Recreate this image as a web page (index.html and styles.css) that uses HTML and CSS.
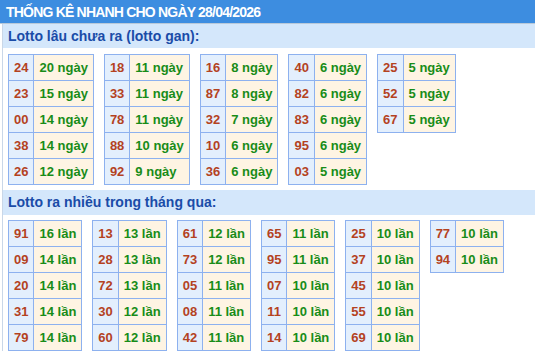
FILE: index.html
```html
<!DOCTYPE html>
<html lang="vi">
<head>
<meta charset="utf-8">
<link rel="stylesheet" href="styles.css">
</head>
<body>
<div class="header">THỐNG KÊ NHANH CHO NGÀY 28/04/2026</div>
<div class="content">
  <div class="band">Lotto lâu chưa ra (lotto gan):</div>
  <div class="tables first">
    <table><tr><td class="n">24</td><td class="v">20 ngày</td></tr><tr><td class="n">23</td><td class="v">15 ngày</td></tr><tr><td class="n">00</td><td class="v">14 ngày</td></tr><tr><td class="n">38</td><td class="v">14 ngày</td></tr><tr><td class="n">26</td><td class="v">12 ngày</td></tr></table>
    <table><tr><td class="n">18</td><td class="v">11 ngày</td></tr><tr><td class="n">33</td><td class="v">11 ngày</td></tr><tr><td class="n">78</td><td class="v">11 ngày</td></tr><tr><td class="n">88</td><td class="v">10 ngày</td></tr><tr><td class="n">92</td><td class="v">9 ngày</td></tr></table>
    <table><tr><td class="n">16</td><td class="v">8 ngày</td></tr><tr><td class="n">87</td><td class="v">8 ngày</td></tr><tr><td class="n">32</td><td class="v">7 ngày</td></tr><tr><td class="n">10</td><td class="v">6 ngày</td></tr><tr><td class="n">36</td><td class="v">6 ngày</td></tr></table>
    <table><tr><td class="n">40</td><td class="v">6 ngày</td></tr><tr><td class="n">82</td><td class="v">6 ngày</td></tr><tr><td class="n">83</td><td class="v">6 ngày</td></tr><tr><td class="n">95</td><td class="v">6 ngày</td></tr><tr><td class="n">03</td><td class="v">5 ngày</td></tr></table>
    <table><tr><td class="n">25</td><td class="v">5 ngày</td></tr><tr><td class="n">52</td><td class="v">5 ngày</td></tr><tr><td class="n">67</td><td class="v">5 ngày</td></tr></table>
  </div>
  <div class="band">Lotto ra nhiều trong tháng qua:</div>
  <div class="tables second">
    <table><tr><td class="n">91</td><td class="v">16 lần</td></tr><tr><td class="n">09</td><td class="v">14 lần</td></tr><tr><td class="n">20</td><td class="v">14 lần</td></tr><tr><td class="n">31</td><td class="v">14 lần</td></tr><tr><td class="n">79</td><td class="v">14 lần</td></tr></table>
    <table><tr><td class="n">13</td><td class="v">13 lần</td></tr><tr><td class="n">28</td><td class="v">13 lần</td></tr><tr><td class="n">72</td><td class="v">13 lần</td></tr><tr><td class="n">30</td><td class="v">12 lần</td></tr><tr><td class="n">60</td><td class="v">12 lần</td></tr></table>
    <table><tr><td class="n">61</td><td class="v">12 lần</td></tr><tr><td class="n">73</td><td class="v">12 lần</td></tr><tr><td class="n">05</td><td class="v">11 lần</td></tr><tr><td class="n">08</td><td class="v">11 lần</td></tr><tr><td class="n">42</td><td class="v">11 lần</td></tr></table>
    <table><tr><td class="n">65</td><td class="v">11 lần</td></tr><tr><td class="n">95</td><td class="v">11 lần</td></tr><tr><td class="n">07</td><td class="v">10 lần</td></tr><tr><td class="n">11</td><td class="v">10 lần</td></tr><tr><td class="n">14</td><td class="v">10 lần</td></tr></table>
    <table><tr><td class="n">25</td><td class="v">10 lần</td></tr><tr><td class="n">37</td><td class="v">10 lần</td></tr><tr><td class="n">45</td><td class="v">10 lần</td></tr><tr><td class="n">55</td><td class="v">10 lần</td></tr><tr><td class="n">69</td><td class="v">10 lần</td></tr></table>
    <table><tr><td class="n">77</td><td class="v">10 lần</td></tr><tr><td class="n">94</td><td class="v">10 lần</td></tr></table>
  </div>
</div>
</body>
</html>
```
FILE: styles.css
```css
html, body {
  margin: 0;
  padding: 0;
  background: #fff;
  font-family: "Liberation Sans", Arial, sans-serif;
}
.header {
  height: 23px;
  line-height: 24px;
  background: #3d8de0;
  color: #fff;
  font-weight: bold;
  font-size: 14px;
  padding-left: 6px;
  border-bottom: 1px solid #b9c9d9;
  letter-spacing: -0.8px;
}
.content {
  margin-left: 2px;
  border-left: 1px solid #c9d7e8;
}
.band {
  height: 24px;
  line-height: 24px;
  background: #d4e7fb;
  color: #1a4ca8;
  font-weight: bold;
  font-size: 14px;
  padding-left: 5px;
}
.tables {
  display: flex;
  align-items: flex-start;
  gap: 10px;
  padding-left: 5px;
}
.first {
  padding-top: 6px;
  padding-bottom: 5px;
}
.second {
  padding-top: 5px;
}
.tables + .band {
  height: 25px;
  line-height: 25px;
}
table {
  border-collapse: collapse;
  border: 1px solid #8db1ef;
}
td {
  border: 1px solid #8db1ef;
  height: 25px;
  line-height: 25px;
  padding: 0 5px;
  font-size: 13px;
  font-weight: bold;
  white-space: nowrap;
}
td.n {
  background: #e3effd;
  color: #b4421f;
  text-align: center;
}
td.v {
  background: #fef4e3;
  color: #188c18;
}
```
